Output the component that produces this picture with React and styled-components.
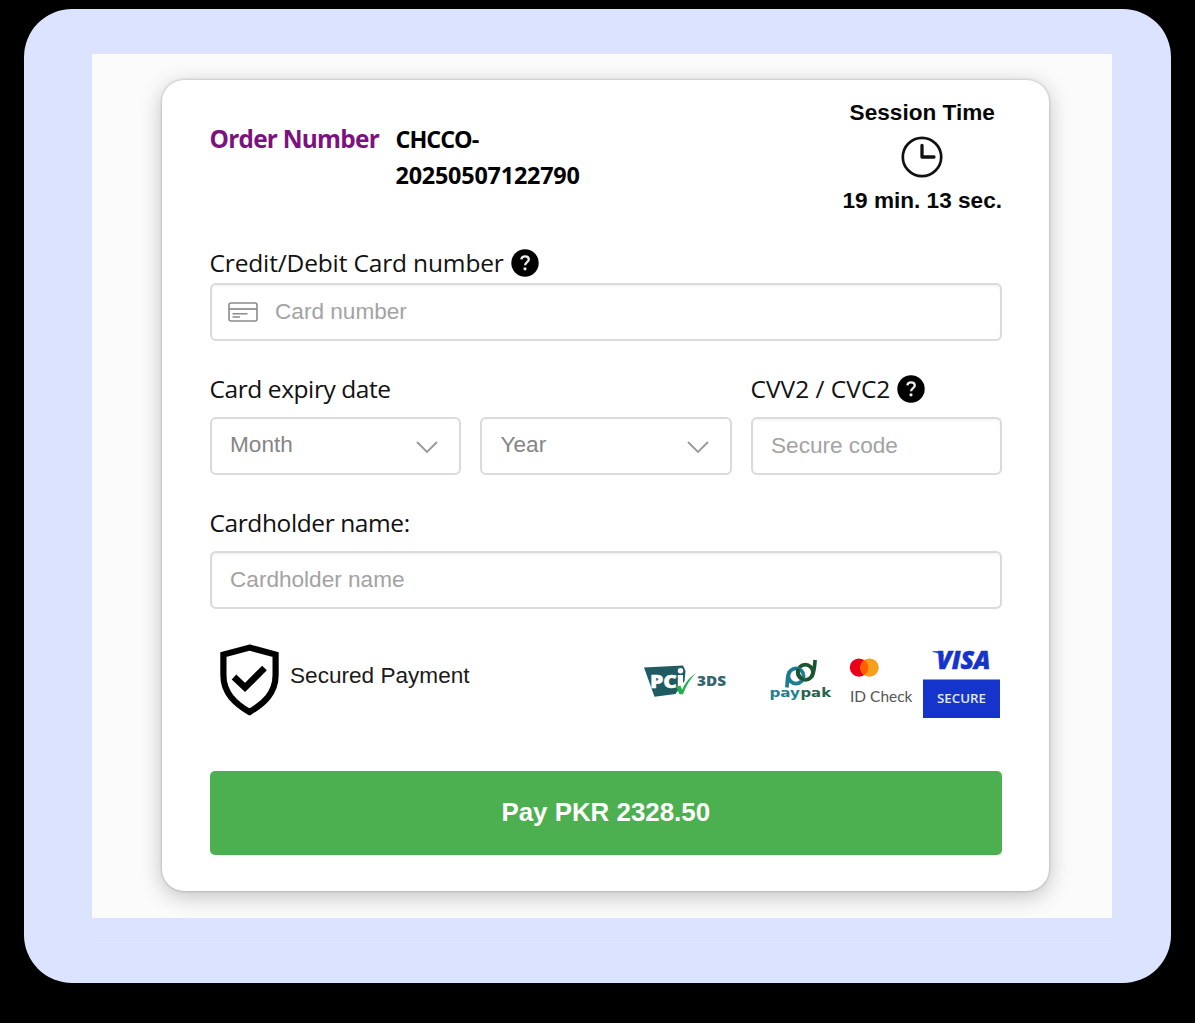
import React from "react";
import styled, { createGlobalStyle } from "styled-components";

const GlobalStyle = createGlobalStyle`
  * { box-sizing: border-box; }
  html, body { margin: 0; background: #000; }
  body { font-family: "Liberation Sans", Arial, sans-serif; color: #111; }
`;

const Screen = styled.div`
  height: 1023px;
  padding: 9px 24px 40px;
  background: #000;
`;

const Frame = styled.div`
  height: 974px;
  padding: 45px 59px 0 67.5px;
  border-radius: 48px;
  background: #dce3ff;
`;

const Page = styled.main`
  height: 864px;
  padding: 26px 63px 0 70px;
  background: #fbfbfb;
  overflow: hidden;
`;

const FooterRule = styled.div`
  height: 1px;
  margin-top: 21px;
  background: #e0e6ff;
`;

const Card = styled.form`
  display: flex;
  flex-direction: column;
  height: 811px;
  padding: 0 47px 0 48px;
  border-radius: 22px;
  background: #fff;
  box-shadow: 0 0 2px 1px rgba(0, 0, 0, 0.13), 0 5px 22px rgba(0, 0, 0, 0.24);
`;

const Header = styled.header`
  display: flex;
  justify-content: space-between;
  height: 165px;
`;

const Order = styled.div`
  display: flex;
  gap: 17px;
  padding-top: 41px;
  font: 700 24.4px/36px "Open Sans", "Noto Sans", sans-serif;
`;

const OrderLabel = styled.span`
  width: 169px;
  white-space: nowrap;
  color: #7d117f;
  letter-spacing: -0.75px;
`;

const OrderValue = styled.span`
  display: flex;
  flex-direction: column;
  width: 190px;
  font-size: 23.4px;
  color: #000;
`;

const OrderLine = styled.span`
  letter-spacing: ${(p) => p.$track || 0}px;
`;

const Session = styled.div`
  display: flex;
  flex-direction: column;
  align-items: center;
  padding-top: 19px;
  font-size: 22.6px;
  font-weight: 700;
  line-height: 28px;
  color: #080808;
  white-space: nowrap;

  svg { margin: 9px 0 9px; }
`;

const Label = styled.label`
  display: flex;
  align-items: center;
  gap: 7px;
  height: 36px;
  font: 400 24.5px/36px "Open Sans", "Noto Sans", sans-serif;
  letter-spacing: ${(p) => p.$track || 0}px;
  white-space: nowrap;
  color: #111;
`;

const Field = styled.div`
  display: flex;
  align-items: center;
  justify-content: space-between;
  height: 58px;
  padding: 0 20px 0 ${(p) => p.$left || 18.5}px;
  padding-bottom: ${(p) => p.$lift || 0}px;
  border: 2px solid #dadada;
  border-radius: 6px;
  background: #fff;
  box-shadow: ${(p) => (p.$inset ? "inset 0 2px 2px rgba(0, 0, 0, 0.04)" : "none")};
  font-size: 22.6px;
  color: ${(p) => (p.$select ? "#858585" : "#a3a3a3")};
`;

const WithIcon = styled.span`
  display: flex;
  align-items: center;
  gap: 17px;
`;

const CardNumber = styled.section`
  display: flex;
  flex-direction: column;
  gap: 2px;
`;

const Expiry = styled.section`
  display: grid;
  grid-template-columns: repeat(3, 1fr);
  column-gap: 19px;
  row-gap: 10px;
  margin-top: 30px;
`;

const ExpiryLabel = styled(Label)`
  grid-column: span 2;
`;

const Holder = styled.section`
  display: flex;
  flex-direction: column;
  gap: 10px;
  margin-top: 30px;
`;

const Trust = styled.section`
  display: flex;
  align-items: center;
  justify-content: space-between;
  height: 80px;
  margin-top: 32px;
`;

const Secured = styled.div`
  display: flex;
  align-items: center;
  gap: 11.5px;
  padding: 0 0 2px 10px;
  font-size: 22.6px;
  color: #1a1a1a;

  span { padding-bottom: 8px; }
`;

const Badges = styled.div`
  display: flex;
  align-items: center;
  padding-right: 1px;
`;

const PayButton = styled.button`
  height: 84px;
  margin-top: 50px;
  padding: 0 0 1px;
  border: 0;
  border-radius: 5px;
  background: #4caf50;
  color: #fff;
  font: 700 25.9px "Liberation Sans", Arial, sans-serif;
`;

const HelpIcon = () => (
  <svg width="28" height="28" viewBox="0 0 28 28">
    <circle cx="14" cy="14" r="13.7" fill="#000" />
    <path d="M10.3 10.4C10.6 8.4 12 7.4 14 7.4c2.3 0 3.8 1.2 3.8 3.1 0 2.6-3.7 2.7-3.7 5.7" fill="none" stroke="#eee" strokeWidth="2.3" />
    <circle cx="14" cy="19.8" r="1.6" fill="#eee" />
  </svg>
);

const ClockIcon = () => (
  <svg width="42" height="42" viewBox="0 0 42 42" fill="none" stroke="#111">
    <circle cx="21" cy="21" r="19.2" strokeWidth="2.7" />
    <path d="M21 9.5V21h12" strokeWidth="3.3" strokeLinecap="round" strokeLinejoin="round" />
  </svg>
);

const CreditCardIcon = () => (
  <svg width="30" height="20" viewBox="0 0 30 20" fill="none" stroke="#8c8c8c">
    <rect x="1" y="1" width="28" height="18" rx="2" strokeWidth="1.6" />
    <path d="M1 7h28" strokeWidth="1.7" />
    <path d="M4.5 11.8h15M4.5 15h7.5" strokeWidth="1.4" />
  </svg>
);

const ChevronSvg = styled.svg`
  margin-top: 4px;
`;

const Chevron = () => (
  <ChevronSvg width="24" height="14" viewBox="0 0 24 14" fill="none" stroke="#999" strokeWidth="1.8">
    <path d="M2 2l10 10L22 2" />
  </ChevronSvg>
);

const ShieldIcon = () => (
  <svg width="59" height="73" viewBox="0 0 59 73" fill="none" stroke="#000">
    <path d="M29.5 3.6L55.6 10.6V31C55.6 49 44 59.5 29.5 68C15 59.5 3.4 49 3.4 31V10.6Z" strokeWidth="6.2" />
    <path d="M14 33l11 10.5L44.5 24" strokeWidth="6.6" />
  </svg>
);

const PciLogo = () => (
  <svg width="90" height="80" viewBox="640 641 90 80">
    <path d="M644 667.500L683 665.500L685.500 671L684.500 681L675.500 694L654.500 696.800Z" fill="#1f5b63" />
    <text x="650" y="688" fontFamily="Open Sans, sans-serif" fontWeight="800" fontSize="17" textLength="27" lengthAdjust="spacingAndGlyphs" fill="#fff" stroke="#fff" strokeWidth=".4">PC</text>
    <path d="M677.800 675h5.200v12.500h-5.200z" fill="#fff" />
    <circle cx="680.500" cy="670.800" r="2.700" fill="#fff" />
    <path d="M676 687l4.200-1.500 2 4.300c3-7 6.500-12 13.800-16.600-6.300 6-10 13-13 21h-3.500z" fill="#22ae4b" />
    <text x="697" y="685.500" fontFamily="Open Sans, sans-serif" fontWeight="800" fontSize="14" textLength="29" lengthAdjust="spacingAndGlyphs" fill="#35666d">3DS</text>
  </svg>
);

const PaypakLogo = () => (
  <svg width="64" height="80" viewBox="768 641 64 80">
    <g fill="none" strokeWidth="3.7">
      <circle cx="805.300" cy="672.200" r="7.600" stroke="#19562f" />
      <path d="M811.500 677c3-4.500 3-10.500 3.600-17" stroke="#19562f" />
      <circle cx="796" cy="676" r="7.600" stroke="#1e7c92" />
      <path d="M789.500 671.500c-2.500 4.500-2 9.500-2.600 16" stroke="#1e7c92" />
      <path d="M798.500 668.800c-2 4.500 1 9.500 5.500 10.900" stroke="#19562f" />
    </g>
    <text x="769.500" y="697" fontFamily="DejaVu Sans, sans-serif" fontWeight="700" fontSize="12.500" textLength="30.500" lengthAdjust="spacingAndGlyphs" fill="#257f91">pay</text>
    <text x="800.500" y="697" fontFamily="DejaVu Sans, sans-serif" fontWeight="700" fontSize="12.500" textLength="30.500" lengthAdjust="spacingAndGlyphs" fill="#28634b">pak</text>
  </svg>
);

const IdCheckLogo = () => (
  <svg width="64" height="80" viewBox="849 641 64 80">
    <circle cx="859" cy="667.600" r="9.200" fill="#eb001b" />
    <circle cx="869.500" cy="667.600" r="9.200" fill="#f79e1b" />
    <path d="M864.250 660a9.200 9.200 0 010 15.200a9.200 9.200 0 010-15.200" fill="#ff5f00" />
    <text x="850" y="701.500" fontFamily="Lato, sans-serif" fontSize="14.800" textLength="62.500" lengthAdjust="spacingAndGlyphs" fill="#555">ID Check</text>
  </svg>
);

const VisaLogo = () => (
  <svg width="79" height="80" viewBox="922 641 79 80">
    <text x="936.500" y="669" fontFamily="Open Sans, sans-serif" fontWeight="800" fontStyle="italic" fontSize="24" textLength="54" lengthAdjust="spacingAndGlyphs" fill="#1434cb" stroke="#1434cb" strokeWidth=".5">VISA</text>
    <path d="M932.500 651.300h9l3 6c-3-3-6.500-4.600-12-5.300z" fill="#1434cb" />
    <rect x="923" y="679.500" width="77" height="38.500" fill="#1434cb" />
    <text x="937" y="703" fontFamily="Open Sans, sans-serif" fontWeight="600" fontSize="13" textLength="49" lengthAdjust="spacingAndGlyphs" fill="#e4e8fa">SECURE</text>
  </svg>
);

const BadgeGap = styled.span`
  width: ${(p) => p.$w}px;
`;

export default function App() {
  return (
    <Screen>
      <GlobalStyle />
      <Frame>
        <Page>
          <Card>
            <Header>
              <Order>
                <OrderLabel>Order Number</OrderLabel>
                <OrderValue>
                  <OrderLine $track={-1}>CHCCO-</OrderLine>
                  <OrderLine $track={-0.22}>20250507122790</OrderLine>
                </OrderValue>
              </Order>
              <Session>
                <span>Session Time</span>
                <ClockIcon />
                <span>19 min. 13 sec.</span>
              </Session>
            </Header>

            <CardNumber>
              <Label $track={-0.15}><span>Credit/Debit Card number</span><HelpIcon /></Label>
              <Field $inset $lift={1} $left={16.5}>
                <WithIcon><CreditCardIcon /><span>Card number</span></WithIcon>
              </Field>
            </CardNumber>

            <Expiry>
              <ExpiryLabel $track={-0.42}>Card expiry date</ExpiryLabel>
              <Label><span>CVV2 / CVC2</span><HelpIcon /></Label>
              <Field $select $lift={3}><span>Month</span><Chevron /></Field>
              <Field $select $lift={3}><span>Year</span><Chevron /></Field>
              <Field $inset $lift={1}>Secure code</Field>
            </Expiry>

            <Holder>
              <Label $track={-0.4}>Cardholder name:</Label>
              <Field $inset $lift={1}>Cardholder name</Field>
            </Holder>

            <Trust>
              <Secured><ShieldIcon /><span>Secured Payment</span></Secured>
              <Badges>
                <PciLogo />
                <BadgeGap $w={38} />
                <PaypakLogo />
                <BadgeGap $w={17} />
                <IdCheckLogo />
                <BadgeGap $w={9} />
                <VisaLogo />
              </Badges>
            </Trust>

            <PayButton type="button">Pay PKR 2328.50</PayButton>
          </Card>
        </Page>
        <FooterRule />
      </Frame>
    </Screen>
  );
}
